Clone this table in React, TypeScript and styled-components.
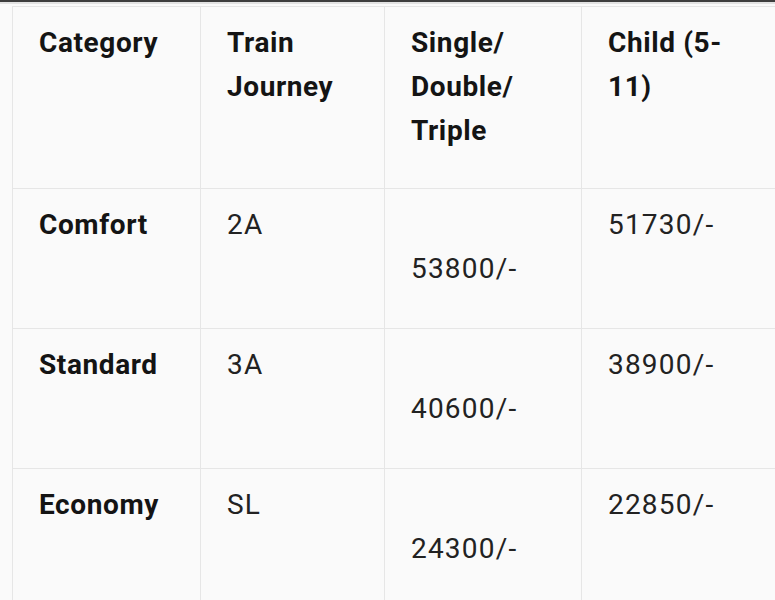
import React from "react";
import styled, { createGlobalStyle } from "styled-components";

const Global = createGlobalStyle`
  html, body {
    margin: 0;
    padding: 0;
    background: #fafafa;
    overflow: hidden;
  }
  body {
    font-family: Roboto, "Liberation Sans", Arial, sans-serif;
    color: #1c1c1c;
  }
`;

const Page = styled.div`
  width: 775px;
  height: 600px;
  overflow: hidden;
  background: #fafafa;
`;

const TopBar = styled.div`
  height: 2px;
  background: #3d3d3d;
  border-bottom: 2px solid #e2e2e2;
`;

const Table = styled.table`
  margin: 2px 0 0 12px;
  border-collapse: collapse;
  table-layout: fixed;
  width: 780px;
`;

const Cell = styled.td<{ $head?: boolean; $top?: boolean }>`
  border: 1px solid #e6e6e6;
  padding: 14px 16px ${(p) => (p.$top ? "35px" : "37px")} 26px;
  vertical-align: top;
  font-size: 28px;
  line-height: 44px;
  font-weight: ${(p) => (p.$head ? 700 : 400)};
  letter-spacing: ${(p) => (p.$head ? "0.6px" : "1.2px")};
  color: ${(p) => (p.$head ? "#141414" : "#222222")};
  white-space: pre-line;
`;

const rows = [
  { cat: "Comfort", train: "2A", price: "53800/-", child: "51730/-" },
  { cat: "Standard", train: "3A", price: "40600/-", child: "38900/-" },
  { cat: "Economy", train: "SL", price: "24300/-", child: "22850/-" },
];

export default function App() {
  return (
    <Page>
      <Global />
      <TopBar />
      <Table>
        <colgroup>
          <col style={{ width: 188 }} />
          <col style={{ width: 184 }} />
          <col style={{ width: 197 }} />
          <col style={{ width: 211 }} />
        </colgroup>
        <tbody>
          <tr>
            <Cell $head $top>Category</Cell>
            <Cell $head $top>{"Train\nJourney"}</Cell>
            <Cell $head $top>{"Single/\nDouble/\nTriple"}</Cell>
            <Cell $head $top>{"Child (5-\n11)"}</Cell>
          </tr>
          {rows.map((r) => (
            <tr key={r.cat}>
              <Cell $head>{r.cat}</Cell>
              <Cell>{r.train}</Cell>
              <Cell>{"\u00a0\n" + r.price}</Cell>
              <Cell>{r.child}</Cell>
            </tr>
          ))}
        </tbody>
      </Table>
    </Page>
  );
}
